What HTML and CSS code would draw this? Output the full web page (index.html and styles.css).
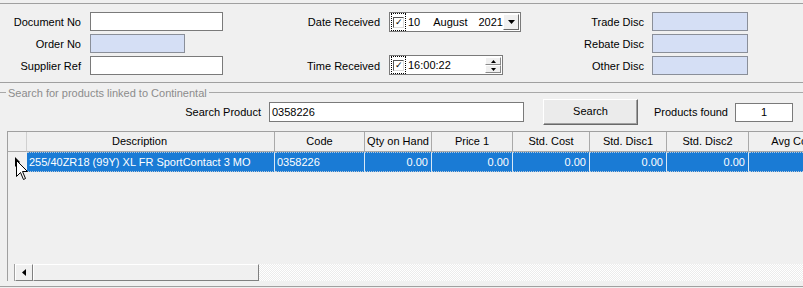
FILE: index.html
```html
<!DOCTYPE html>
<html lang="en">
<head>
    <meta charset="UTF-8">
    <meta name="viewport" content="width=device-width, initial-scale=1.0">
    <title>Goods Received</title>
    <link rel="stylesheet" href="styles.css">
</head>
<body>
<div class="window">
    <div class="header-panel">
        <div class="fields fields-doc">
            <label>Document No</label><div class="edit w-wide"></div>
            <label>Order No</label><div class="edit edit-ro w-short"></div>
            <label>Supplier Ref</label><div class="edit w-wide"></div>
        </div>

        <div class="fields fields-date">
            <label>Date Received</label>
            <div class="picker picker-date">
                <span class="check"><span class="box">&#10003;</span></span>
                <span class="day">10</span>
                <span class="month">August</span>
                <span class="year">2021</span>
                <span class="drop">
                    <svg width="7" height="4" viewBox="0 0 7 4"><path d="M0 0H7L3.5 4Z" fill="#000"/></svg>
                </span>
            </div>
            <span></span><span></span>
            <label>Time Received</label>
            <div class="picker picker-time">
                <span class="check"><span class="box">&#10003;</span></span>
                <span class="time">16:00:22</span>
                <span class="spin">
                    <span class="spin-btn"><svg width="5" height="3" viewBox="0 0 5 3"><path d="M0 3H5L2.5 0Z" fill="#000"/></svg></span>
                    <span class="spin-btn"><svg width="5" height="3" viewBox="0 0 5 3"><path d="M0 0H5L2.5 3Z" fill="#000"/></svg></span>
                </span>
            </div>
        </div>

        <div class="fields fields-disc">
            <label>Trade Disc</label><div class="edit edit-ro w-disc"></div>
            <label>Rebate Disc</label><div class="edit edit-ro w-disc"></div>
            <label>Other Disc</label><div class="edit edit-ro w-disc"></div>
        </div>
    </div>

    <div class="group">
        <div class="group-title"><span>Search for products linked to Continental</span></div>

        <div class="search-bar">
            <label class="search-label">Search Product</label>
            <div class="edit search-input">0358226</div>
            <button class="btn">Search</button>
            <label class="found-label">Products found</label>
            <div class="edit found-input">1</div>
        </div>

        <div class="grid">
            <div class="grid-row grid-head">
                <div class="cell rowhdr"></div>
                <div class="cell desc">Description</div>
                <div class="cell">Code</div>
                <div class="cell">Qty on Hand</div>
                <div class="cell">Price 1</div>
                <div class="cell">Std. Cost</div>
                <div class="cell">Std. Disc1</div>
                <div class="cell">Std. Disc2</div>
                <div class="cell">Avg Cost</div>
            </div>
            <div class="grid-row grid-data selected">
                <div class="cell rowhdr">
                    <svg width="6" height="10" viewBox="0 0 6 10"><path d="M0 0L5 5L0 10Z" fill="#000"/></svg>
                </div>
                <div class="cell txt">255/40ZR18 (99Y) XL FR SportContact 3 MO</div>
                <div class="cell txt">0358226</div>
                <div class="cell num">0.00</div>
                <div class="cell num">0.00</div>
                <div class="cell num">0.00</div>
                <div class="cell num">0.00</div>
                <div class="cell num">0.00</div>
                <div class="cell num">0.00</div>
            </div>
            <div class="grid-space"></div>
            <div class="hscroll">
                <span class="hs-gap"></span>
                <span class="hs-arrow">
                    <svg width="4" height="7" viewBox="0 0 4 7"><path d="M4 0V7L0 3.5Z" fill="#000"/></svg>
                </span>
                <span class="hs-thumb"></span>
                <span class="hs-track"></span>
            </div>
        </div>
    </div>

    <!-- mouse pointer over the row indicator -->
    <svg class="cursor" width="13" height="21" viewBox="0 0 13 21">
        <path d="M0.5 0.5V16.5L4.5 12.5L7.5 19.5L9.5 18.5L6.5 11.5H11.5Z" fill="#fff" stroke="#000" stroke-width="1"/>
    </svg>
</div>
</body>
</html>
```

FILE: styles.css
```css
body {
    margin: 0;
    background-color: #f0f0f0;
    font-family: "Liberation Sans", Arial, sans-serif;
    font-size: 11px;
    color: #000;
    overflow: hidden;
}
.window {
    position: relative;
    width: 803px;
    height: 288px;
}

/* top panel */
.header-panel {
    display: flex;
    margin-top: 3px;
    padding: 8px 0 7px;
    border-top: 1px solid #a0a0a0;
    border-bottom: 1px solid #a0a0a0;
}
.fields {
    display: grid;
    grid-auto-rows: 19px;
    row-gap: 3px;
    column-gap: 9px;
    align-items: center;
}
.fields label {
    text-align: right;
}
.fields-doc {
    grid-template-columns: 81px 133px;
}
.fields-date {
    grid-template-columns: 157px 132px;
}
.fields-disc {
    grid-template-columns: 123px 96px;
    column-gap: 8px;
}
.edit {
    box-sizing: border-box;
    height: 19px;
    background-color: #fff;
    border: 1px solid #7a7a7a;
    line-height: 17px;
    padding: 0 2px;
}
.edit-ro {
    background-color: #d5dff5;
    border-color: #8a8f99;
}
.w-wide { width: 133px; }
.w-short { width: 95px; }
.w-disc { width: 96px; }

/* date / time pickers */
.picker {
    box-sizing: border-box;
    display: flex;
    align-items: center;
    height: 20px;
    background-color: #fff;
    border: 1px solid #7a7a7a;
    align-self: start;
}
.picker-time {
    width: 114px;
    margin-top: -1px;
}
.check {
    display: flex;
    align-items: center;
    justify-content: center;
    width: 13px;
    height: 16px;
    margin-left: 1px;
    border: 1px dotted #000;
}
.check .box {
    box-sizing: border-box;
    width: 11px;
    height: 11px;
    border: 1px solid #555;
    border-right-color: #ddd;
    border-bottom-color: #ddd;
    font-size: 9px;
    line-height: 9px;
    text-align: center;
}
.day { margin-left: 2px; }
.month { margin-left: 13px; }
.year { margin-left: 11px; }
.time { margin-left: 2px; }
.drop {
    box-sizing: border-box;
    display: flex;
    align-items: center;
    justify-content: center;
    width: 16px;
    height: 16px;
    margin-left: auto;
    margin-right: 1px;
    background-color: #f0f0f0;
    border: 1px solid #fff;
    border-right-color: #696969;
    border-bottom-color: #696969;
}
.spin {
    display: flex;
    flex-direction: column;
    margin-left: auto;
    margin-right: 1px;
}
.spin-btn {
    box-sizing: border-box;
    display: flex;
    align-items: center;
    justify-content: center;
    width: 16px;
    height: 8px;
    background-color: #f0f0f0;
    border: 1px solid #fff;
    border-right-color: #8a8a8a;
    border-bottom-color: #8a8a8a;
}

/* search group */
.group {
    border-bottom: 1px solid #a0a0a0;
    padding-bottom: 5px;
}
.group-title {
    display: flex;
    align-items: center;
    height: 13px;
    margin-top: 3px;
    color: #8c8c8c;
}
.group-title::before {
    content: "";
    width: 6px;
    height: 1px;
    background-color: #a8a8a8;
}
.group-title::after {
    content: "";
    flex: 1;
    height: 1px;
    background-color: #a8a8a8;
}
.group-title span {
    padding: 0 2px;
}
.search-bar {
    display: flex;
    align-items: center;
    height: 26px;
}
.search-label {
    width: 261px;
    text-align: right;
}
.search-input {
    width: 255px;
    height: 20px;
    margin-left: 8px;
    line-height: 18px;
}
.btn {
    box-sizing: border-box;
    width: 95px;
    height: 26px;
    margin-left: 19px;
    font: inherit;
    background-color: #ebebeb;
    border: 1px solid #fff;
    border-right-color: #696969;
    border-bottom-color: #696969;
    box-shadow: inset -1px -1px #a0a0a0;
    padding: 0 0 2px;
}
.found-label {
    margin-left: 16px;
}
.found-input {
    width: 58px;
    margin-left: 7px;
    text-align: center;
}

/* grid */
.grid {
    margin: 6px 0 0 7px;
    border-left: 1px solid #a0a0a0;
    border-top: 1px solid #a0a0a0;
    overflow: hidden;
}
.grid-row {
    display: grid;
    grid-template-columns: 19px 248px 90px 67px 81px 77px 77px 82px 90px;
    height: 20px;
}
.cell {
    box-sizing: border-box;
    border-right: 1px solid #a9a9a9;
    white-space: nowrap;
    overflow: hidden;
}
.grid-head .cell {
    text-align: center;
    line-height: 19px;
    border-bottom: 1px solid #a9a9a9;
}
.grid-head .desc {
    padding-right: 22px;
}
.grid-head .rowhdr {
    border-right-color: #d0d0d0;
}
.grid-data .rowhdr {
    display: flex;
    align-items: center;
    padding-left: 7px;
    border-right-color: #f0f0f0;
}
.selected .cell.txt,
.selected .cell.num {
    background-color: #1a7bd5;
    color: #fff;
    border-right-color: #d8e8f6;
    border-top: 1px dotted #b8c8d8;
    border-bottom: 1px dotted #b8c8d8;
    line-height: 18px;
}
.cell.txt { padding-left: 2px; }
.cell.num { padding-right: 3px; text-align: right; }
.grid-space {
    height: 92px;
}
.hscroll {
    display: flex;
    height: 17px;
}
.hs-gap {
    box-sizing: border-box;
    width: 7px;
    border-right: 1px solid #a0a0a0;
}
.hs-arrow {
    box-sizing: border-box;
    display: flex;
    align-items: center;
    justify-content: center;
    width: 18px;
    border: 1px solid #fff;
    border-right-color: #808080;
    border-bottom-color: #808080;
}
.hs-thumb {
    box-sizing: border-box;
    width: 226px;
    border: 1px solid #fff;
    border-right-color: #808080;
    border-bottom-color: #808080;
}
.hs-track {
    flex: 1;
    background-color: #f6f6f6;
    background-image: repeating-conic-gradient(#fff 0 25%, #ececec 0 50%);
    background-size: 2px 2px;
}

.cursor {
    position: absolute;
    left: 16px;
    top: 157px;
}
```
